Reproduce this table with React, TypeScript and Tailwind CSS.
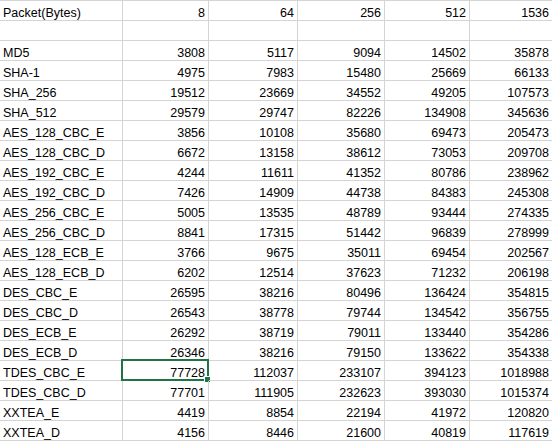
const header = ["Packet(Bytes)", "8", "64", "256", "512", "1536"];

const rows: (string | number)[][] = [
  ["MD5", 3808, 5117, 9094, 14502, 35878],
  ["SHA-1", 4975, 7983, 15480, 25669, 66133],
  ["SHA_256", 19512, 23669, 34552, 49205, 107573],
  ["SHA_512", 29579, 29747, 82226, 134908, 345636],
  ["AES_128_CBC_E", 3856, 10108, 35680, 69473, 205473],
  ["AES_128_CBC_D", 6672, 13158, 38612, 73053, 209708],
  ["AES_192_CBC_E", 4244, 11611, 41352, 80786, 238962],
  ["AES_192_CBC_D", 7426, 14909, 44738, 84383, 245308],
  ["AES_256_CBC_E", 5005, 13535, 48789, 93444, 274335],
  ["AES_256_CBC_D", 8841, 17315, 51442, 96839, 278999],
  ["AES_128_ECB_E", 3766, 9675, 35011, 69454, 202567],
  ["AES_128_ECB_D", 6202, 12514, 37623, 71232, 206198],
  ["DES_CBC_E", 26595, 38216, 80496, 136424, 354815],
  ["DES_CBC_D", 26543, 38778, 79744, 134542, 356755],
  ["DES_ECB_E", 26292, 38719, 79011, 133440, 354286],
  ["DES_ECB_D", 26346, 38216, 79150, 133622, 354338],
  ["TDES_CBC_E", 77728, 112037, 233107, 394123, 1018988],
  ["TDES_CBC_D", 77701, 111905, 232623, 393030, 1015374],
  ["XXTEA_E", 4419, 8854, 22194, 41972, 120820],
  ["XXTEA_D", 4156, 8446, 21600, 40819, 117619],
];

const cols = "grid grid-cols-[123px_86px_89px_87px_85px_83px]";

function Row({ cells, selectedCol }: { cells: (string | number)[]; selectedCol?: number }) {
  return (
    <div className={`${cols} h-[20px]`}>
      {cells.map((c, i) => (
        <div
          key={i}
          className={`relative flex items-end pb-[1px] border-b border-r border-[#d4d4d4] leading-none whitespace-nowrap ${
            i === 0 ? "justify-start pl-[3px]" : "justify-end pr-[3px]"
          }`}
        >
          {c}
          {selectedCol === i && (
            <div className="absolute -left-[2px] -top-[2px] -right-[1px] -bottom-[1px] border-2 border-[#217346]">
              <div className="absolute -right-[4px] -bottom-[4px] w-[7px] h-[7px] bg-[#217346] border border-white" />
            </div>
          )}
        </div>
      ))}
    </div>
  );
}

export default function App() {
  return (
    <div className="w-[552px] h-[441px] overflow-hidden bg-white text-[12.5px] text-black font-['Liberation_Sans',Arial,sans-serif]">
      <div className="border-t border-[#d4d4d4]">
        <Row cells={header} />
        <Row cells={["", "", "", "", "", ""]} />
        {rows.map((r, idx) => (
          <Row key={idx} cells={r} selectedCol={r[0] === "TDES_CBC_E" ? 1 : undefined} />
        ))}
      </div>
    </div>
  );
}
